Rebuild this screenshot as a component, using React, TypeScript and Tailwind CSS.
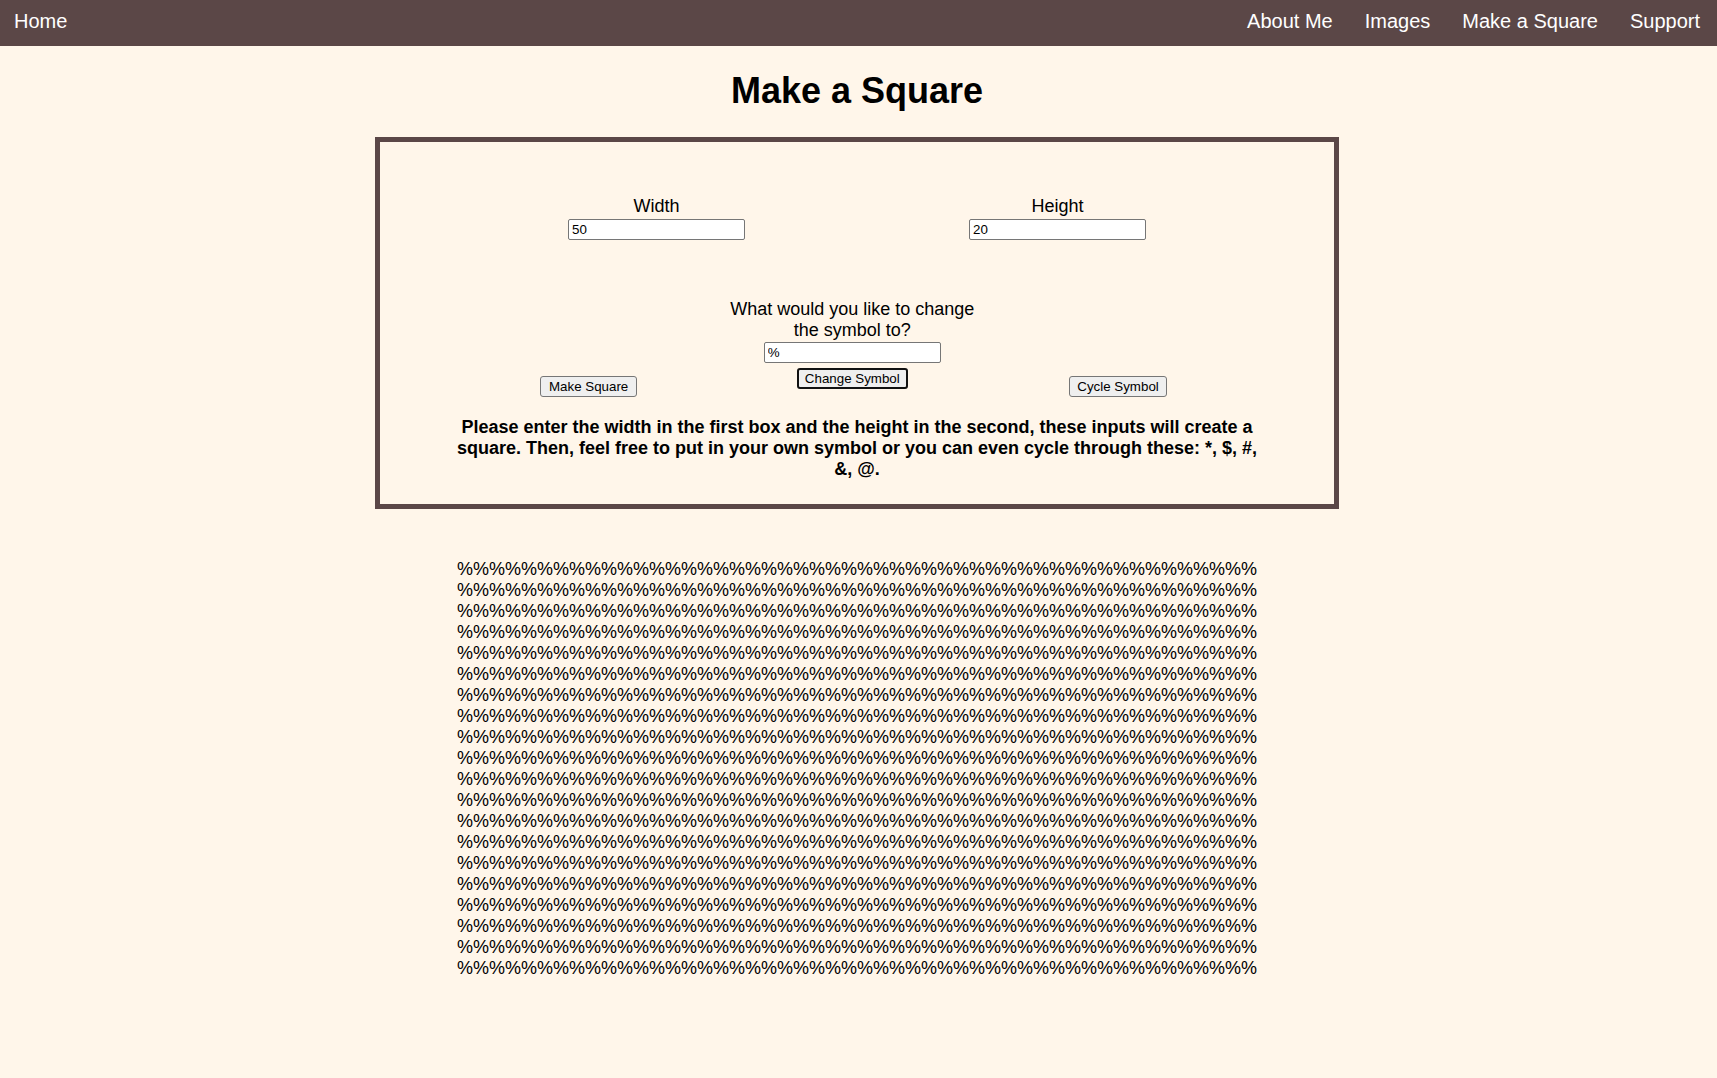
import React, { useState } from 'react';

const symbols = ['*', '$', '#', '&', '@'];

const App: React.FC = () => {
  const [width, setWidth] = useState('50');
  const [height, setHeight] = useState('20');
  const [symbolInput, setSymbolInput] = useState('%');
  const [symbol, setSymbol] = useState('%');
  const [size, setSize] = useState({ w: 50, h: 20 });
  const [cycleIndex, setCycleIndex] = useState(0);

  const makeSquare = () => {
    const w = parseInt(width, 10) || 0;
    const h = parseInt(height, 10) || 0;
    setSize({ w, h });
  };

  const cycleSymbol = () => {
    const next = symbols[cycleIndex % symbols.length];
    setSymbol(next);
    setSymbolInput(next);
    setCycleIndex(cycleIndex + 1);
  };

  const rows = Array.from({ length: size.h }, () => symbol.repeat(size.w));

  return (
    <div className="min-h-screen bg-[#fff6ea] text-black font-['Liberation_Sans',Arial,sans-serif]">
      {/* Top bar */}
      <nav className="flex h-[46px] bg-[#5b4747] text-[20px] leading-[23px] text-white">
        <a href="#" className="pl-[14px] pt-[10px]">Home</a>
        <div className="ml-auto flex gap-[32px] pr-[17px] pt-[10px]">
          <a href="#">About Me</a>
          <a href="#">Images</a>
          <a href="#">Make a Square</a>
          <a href="#">Support</a>
        </div>
      </nav>

      <main className="pr-[3px]">
        <h1 className="mt-[24px] text-center text-[36px] font-bold leading-[41px]">Make a Square</h1>

        {/* Controls */}
        <section className="mx-auto mt-[26px] w-[964px] border-[5px] border-[#5b4747] pt-[54px] pb-[24px]">
          <div className="flex justify-center gap-[224px]">
            <div className="flex w-[177px] flex-col items-center">
              <label className="text-[18px] leading-[21px]">Width</label>
              <input
                value={width}
                onChange={(e) => setWidth(e.target.value)}
                className="mt-[2px] h-[21px] w-[177px] rounded-[2px] border border-[#767676] bg-white pl-[3px] text-[13.33px] outline-none"
              />
            </div>
            <div className="flex w-[177px] flex-col items-center">
              <label className="text-[18px] leading-[21px]">Height</label>
              <input
                value={height}
                onChange={(e) => setHeight(e.target.value)}
                className="mt-[2px] h-[21px] w-[177px] rounded-[2px] border border-[#767676] bg-white pl-[3px] text-[13.33px] outline-none"
              />
            </div>
          </div>

          <div className="mt-[59px] flex items-end pl-[160px]">
            <button
              onClick={makeSquare}
              className="h-[21px] rounded-[3px] border border-[#767676] bg-[#efefef] px-[8px] text-[13.33px] leading-[15px]"
            >
              Make Square
            </button>
            <div className="mb-[8px] ml-[90px] mr-[92px] flex w-[250px] flex-col items-center">
              <p className="text-center text-[18px] leading-[21px]">What would you like to change the symbol to?</p>
              <input
                value={symbolInput}
                onChange={(e) => setSymbolInput(e.target.value)}
                className="mt-[1px] h-[21px] w-[177px] rounded-[2px] border border-[#767676] bg-white pl-[3px] text-[13.33px] outline-none"
              />
              <button
                onClick={() => setSymbol(symbolInput || '%')}
                className="mt-[5px] h-[21px] rounded-[3px] border-2 border-[#111] bg-[#efefef] px-[6px] text-[13.33px] leading-[15px]"
              >
                Change Symbol
              </button>
            </div>
            <button
              onClick={cycleSymbol}
              className="h-[21px] rounded-[3px] border border-[#767676] bg-[#efefef] px-[7px] text-[13.33px] leading-[15px]"
            >
              Cycle Symbol
            </button>
          </div>

          <p className="mx-auto mt-[20px] w-[811px] text-center text-[18px] font-bold leading-[21px]">
            Please enter the width in the first box and the height in the second, these inputs will create a square. Then,
            feel free to put in your own symbol or you can even cycle through these: *, $, #, &amp;, @.
          </p>
        </section>

        {/* Output square */}
        <div className="mt-[50px] pb-[40px] text-center text-[18px] leading-[21px]">
          {rows.map((row, i) => (
            <div key={i}>{row}</div>
          ))}
        </div>
      </main>
    </div>
  );
};

export default App;
